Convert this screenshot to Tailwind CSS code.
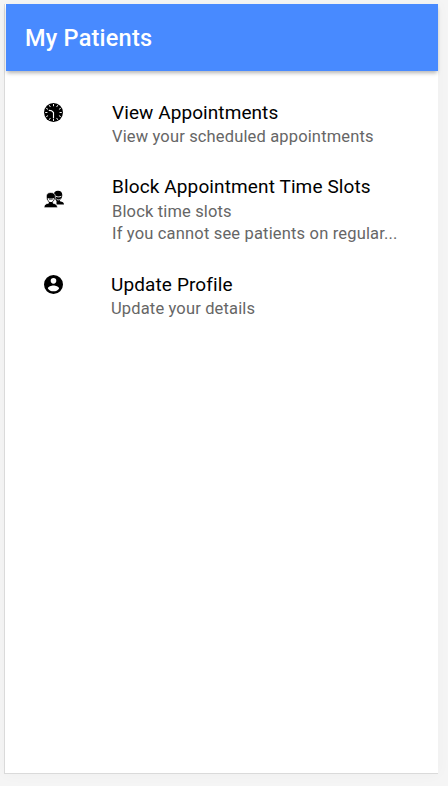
<!DOCTYPE html>
<html lang="en">
<head>
  <meta charset="UTF-8">
  <meta name="viewport" content="width=device-width, initial-scale=1.0">
  <title>My Patients</title>
  <script src="https://cdn.jsdelivr.net/npm/@tailwindcss/browser@4"></script>
</head>
<body class="bg-[#f5f5f5] h-screen overflow-hidden pt-1 pl-1 font-[Roboto,sans-serif]">

  <div class="w-[434px] h-[770px] bg-white border-l border-b border-[#dadada] shadow-[0_0_14px_rgba(0,0,0,0.03)]">
    <header class="ml-px h-[67px] bg-[#488aff] flex items-center pl-[19px] pt-px shadow-[0_3px_4px_-1px_rgba(0,0,0,0.3)]">
      <h1 class="text-white text-[23.5px] leading-7 font-medium tracking-[0.22px]">My Patients</h1>
    </header>

    <ul class="pl-[39px] pt-[30px]">
      <li class="flex h-[74px]">
        <svg class="w-[19px] h-[19px] mt-[2px] mr-[49px] shrink-0" viewBox="0 0 20 20">
          <circle cx="10" cy="10" r="10"/>
          <g stroke="#fff" stroke-width="1" stroke-linecap="round">
            <path d="M10 1.500v1.500M10 17v1.500M1.700 10h1.500M16.800 10h1.500M5.800 2.700l.7 1.200M14.200 2.700l-.7 1.200M2.700 5.800l1.200.7M17.300 5.800l-1.200.7M2.700 14.200l1.200-.7M17.300 14.200l-1.200-.7M5.800 17.300l.7-1.200M14.200 17.300l-.7-1.200"/>
            <path d="M5.500 7.800l2.500.4 2 1.800v5.500" fill="none" stroke-width="1.200"/>
          </g>
        </svg>
        <div>
          <h2 class="text-[19px] leading-6 tracking-[0.08px] text-black">View Appointments</h2>
          <p class="text-[16.5px] leading-[22px] pt-px tracking-[0.15px] text-[#666]">View your scheduled appointments</p>
        </div>
      </li>
      <li class="flex h-[98px]">
        <svg class="w-5 h-[18px] mt-[15px] mr-[48px] shrink-0" viewBox="0 0 20 18">
          <path d="M14 .8c-3 0-4.400 1.800-4.200 4.200C10 8 11.500 10 12.500 11v3.500h7.500c0-2-1.500-2.700-4-3.200v-1.200c1.400-1 2.300-3 2.300-5C18.300 2.300 16.700.8 14 .8z"/>
          <path d="M11.800 6.200c1.700.9 3.900.9 5.600 0M12.500 9c1.200 1.200 2.800 1.200 4 0" fill="none" stroke="#fff" stroke-width=".9"/>
          <path d="M6.800 2.500c-3.200 0-4.700 1.700-4.500 4.500.1 2 .9 3.900 2.200 5v1.200c-3 .5-4.500 1.700-4.500 4.500h13.500c0-2.800-1.500-4-4.400-4.500V12c1.300-1.100 2.200-3 2.300-5 .1-2.800-1.500-4.500-4.600-4.500z" stroke="#fff" stroke-width=".7"/>
          <path d="M3.600 7.900c.3 2.700 1.600 4.200 3.200 4.200s3-1.500 3.300-4.200c-2 .8-4.500.8-6.500 0z" fill="#fff"/>
          <path d="M5 9.300h3.700" stroke="#000" stroke-width=".6"/>
        </svg>
        <div>
          <h2 class="text-[19px] leading-6 tracking-[0.12px] text-black">Block Appointment Time Slots</h2>
          <p class="text-[16.5px] leading-[22px] pt-[2px] tracking-[0.15px] text-[#666]">Block time slots</p>
          <p class="text-[16.5px] leading-[22px] tracking-[0.17px] text-[#666]">If you cannot see patients on regular...</p>
        </div>
      </li>
      <li class="flex">
        <svg class="w-[19px] h-[19px] mt-[2px] mr-[48px] shrink-0" viewBox="0 0 20 20">
          <path fill-rule="evenodd" d="M10 0a10 10 0 1 0 0 20A10 10 0 0 0 10 0zm0 3.200a2.900 2.900 0 1 1 0 5.900 2.900 2.900 0 0 1 0-5.900zm0 14c-2.500 0-4.600-1.200-5.900-3.100 0-1.900 3.900-3 5.900-3s5.900 1.100 5.900 3c-1.300 1.900-3.400 3.100-5.900 3.100z"/>
        </svg>
        <div>
          <h2 class="text-[19px] leading-6 tracking-[0.12px] text-black">Update Profile</h2>
          <p class="text-[16.5px] leading-[22px] pt-px tracking-[0.15px] text-[#666]">Update your details</p>
        </div>
      </li>
    </ul>
  </div>

</body>
</html>
